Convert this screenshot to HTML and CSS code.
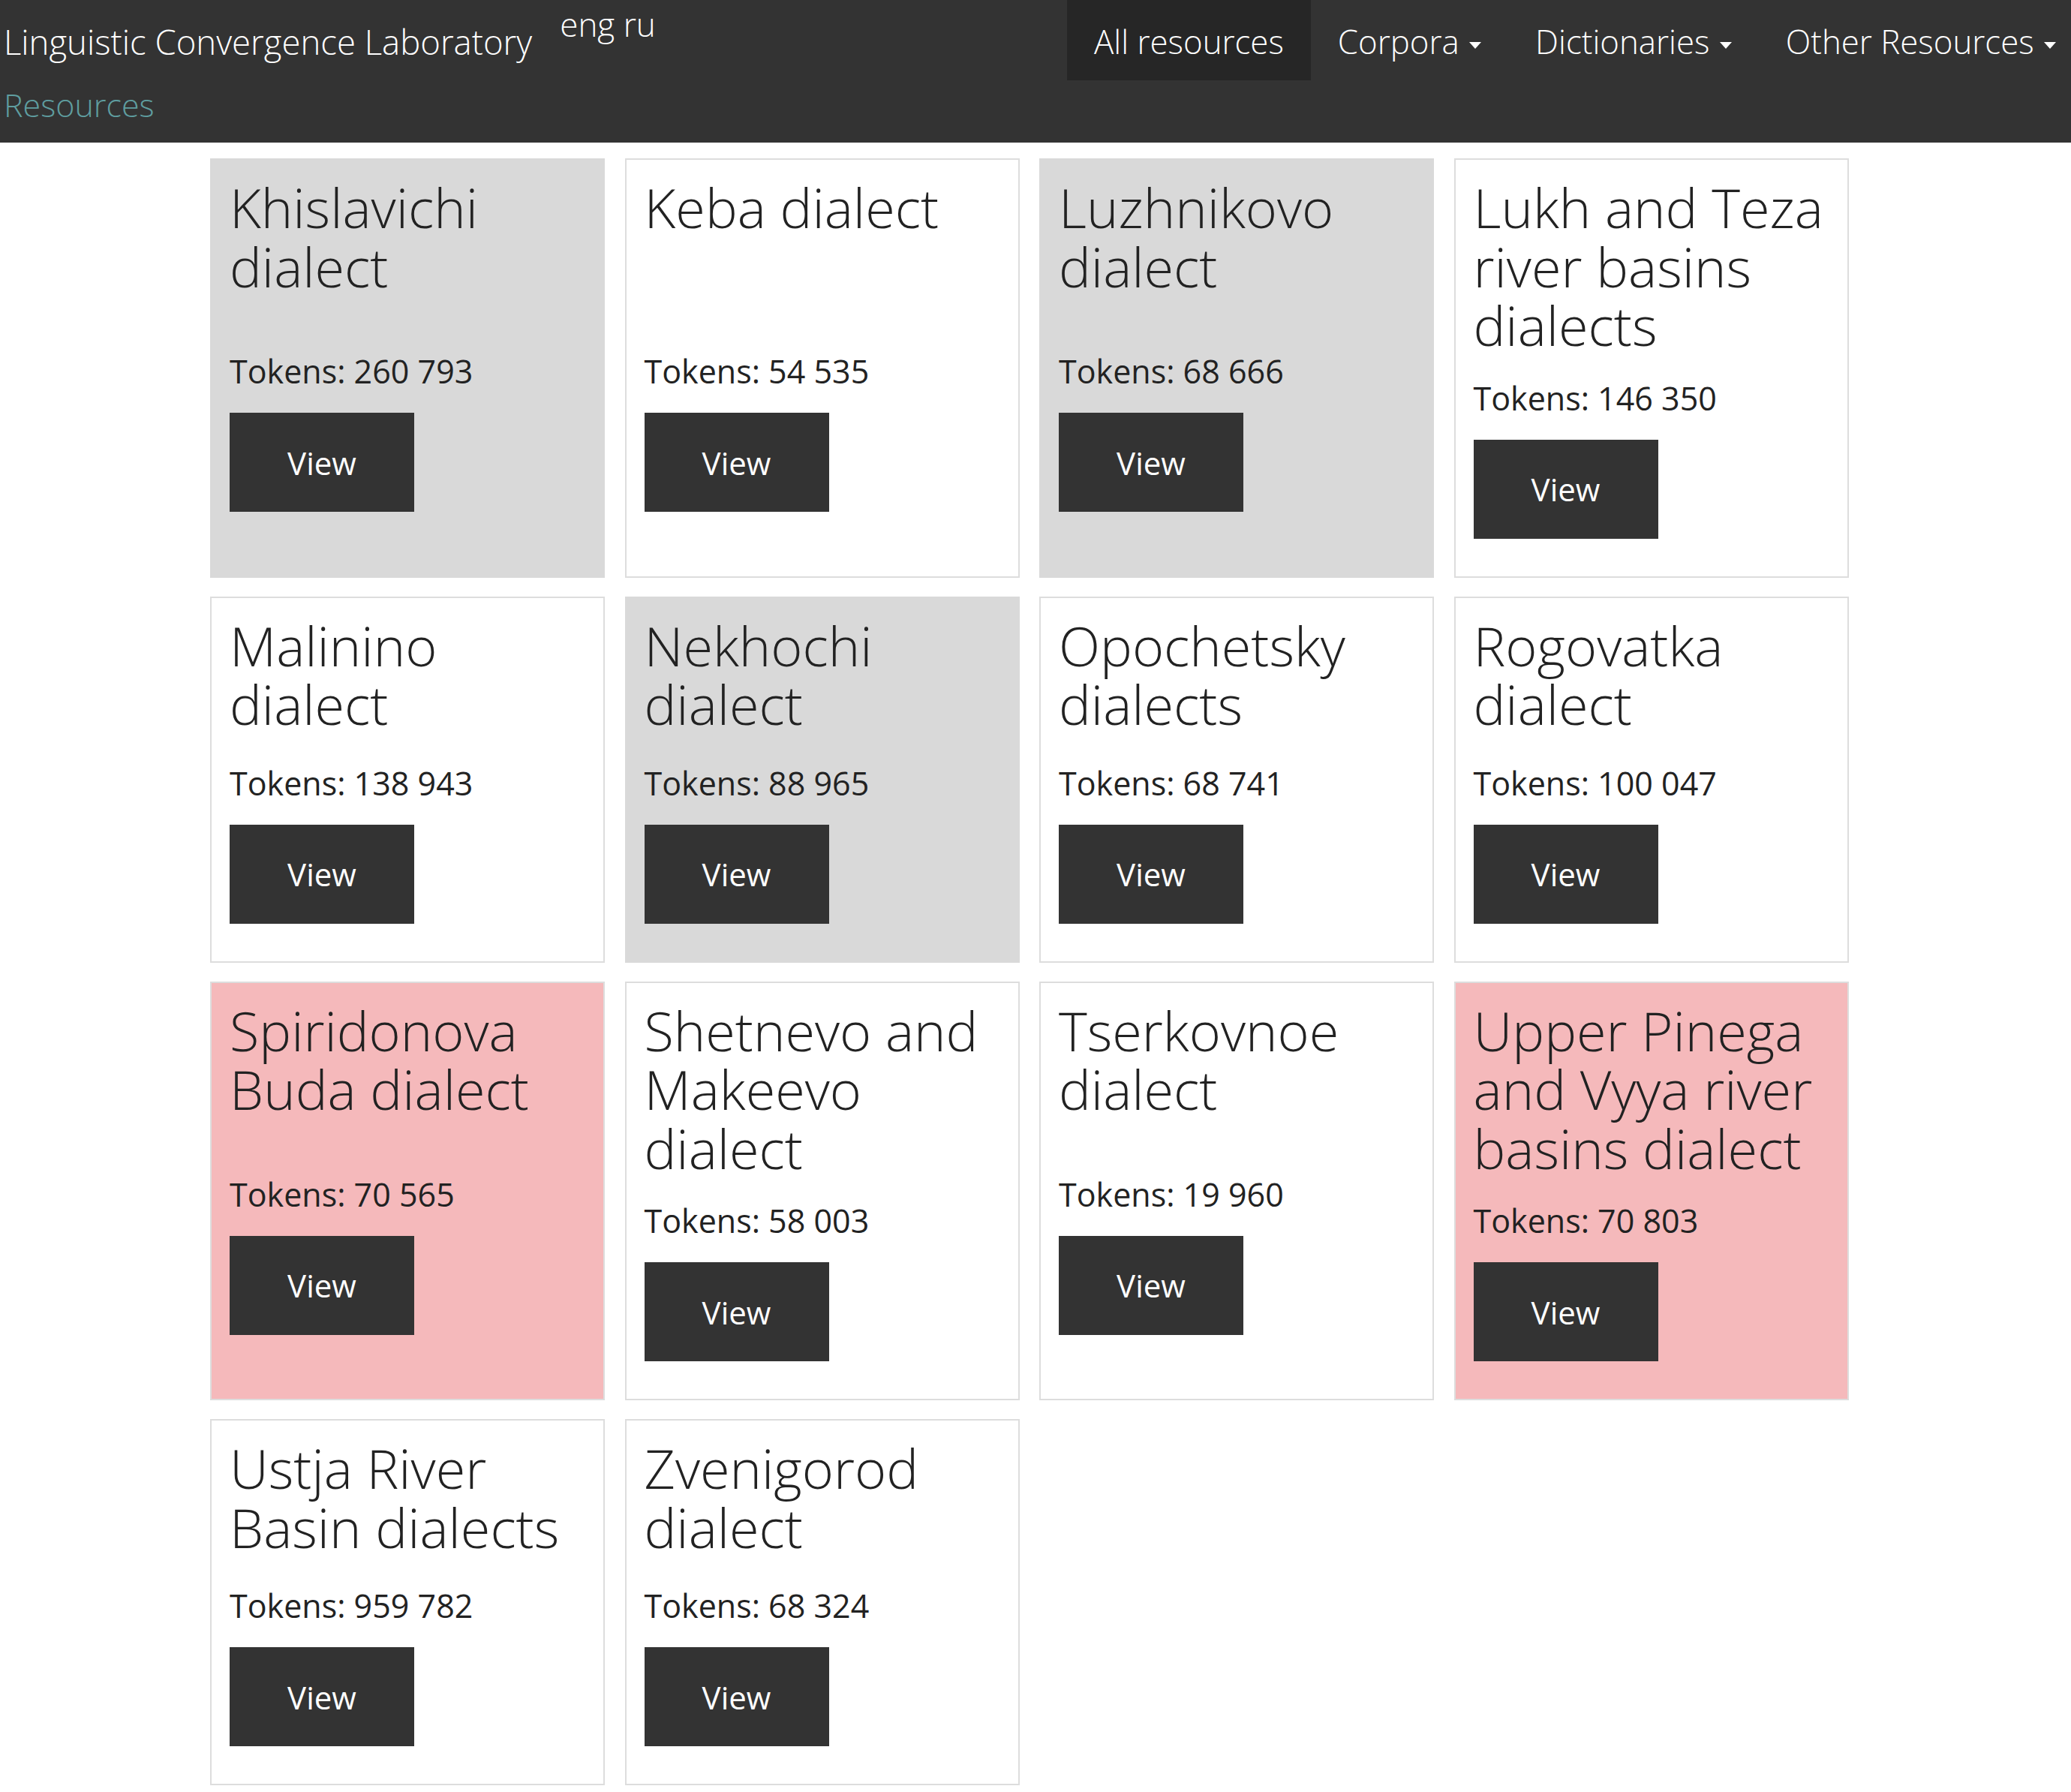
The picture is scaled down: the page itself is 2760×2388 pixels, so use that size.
FILE: index.html
```html
<!DOCTYPE html>
<html lang="en">
<head>
<meta charset="utf-8">
<title>Resources — Linguistic Convergence Laboratory</title>
<link rel="stylesheet" href="styles.css">
</head>
<body>
<header class="navbar">
  <div class="brand-block">
    <div class="brand-row">
      <a class="brand" href="#">Linguistic Convergence Laboratory</a>
      <div class="langs"><a href="#">eng</a> <a href="#">ru</a></div>
    </div>
    <div class="subtitle">Resources</div>
  </div>
  <ul class="nav">
    <li class="nav-item active"><a href="#">All resources</a></li>
    <li class="nav-item"><a href="#">Corpora <span class="caret"></span></a></li>
    <li class="nav-item"><a href="#">Dictionaries <span class="caret"></span></a></li>
    <li class="nav-item"><a href="#">Other Resources <span class="caret"></span></a></li>
  </ul>
</header>

<main class="grid">
  <div class="card card-gray">
    <h2 class="card-title">Khislavichi dialect</h2>
    <div class="card-body"><p class="tokens">Tokens: 260 793</p><a class="btn" href="#">View</a></div>
  </div>
  <div class="card">
    <h2 class="card-title">Keba dialect</h2>
    <div class="card-body"><p class="tokens">Tokens: 54 535</p><a class="btn" href="#">View</a></div>
  </div>
  <div class="card card-gray">
    <h2 class="card-title">Luzhnikovo dialect</h2>
    <div class="card-body"><p class="tokens">Tokens: 68 666</p><a class="btn" href="#">View</a></div>
  </div>
  <div class="card">
    <h2 class="card-title">Lukh and Teza river basins dialects</h2>
    <div class="card-body"><p class="tokens">Tokens: 146 350</p><a class="btn" href="#">View</a></div>
  </div>

  <div class="card">
    <h2 class="card-title">Malinino dialect</h2>
    <div class="card-body"><p class="tokens">Tokens: 138 943</p><a class="btn" href="#">View</a></div>
  </div>
  <div class="card card-gray">
    <h2 class="card-title">Nekhochi dialect</h2>
    <div class="card-body"><p class="tokens">Tokens: 88 965</p><a class="btn" href="#">View</a></div>
  </div>
  <div class="card">
    <h2 class="card-title">Opochetsky dialects</h2>
    <div class="card-body"><p class="tokens">Tokens: 68 741</p><a class="btn" href="#">View</a></div>
  </div>
  <div class="card">
    <h2 class="card-title">Rogovatka dialect</h2>
    <div class="card-body"><p class="tokens">Tokens: 100 047</p><a class="btn" href="#">View</a></div>
  </div>

  <div class="card card-pink">
    <h2 class="card-title">Spiridonova Buda dialect</h2>
    <div class="card-body"><p class="tokens">Tokens: 70 565</p><a class="btn" href="#">View</a></div>
  </div>
  <div class="card">
    <h2 class="card-title">Shetnevo and Makeevo dialect</h2>
    <div class="card-body"><p class="tokens">Tokens: 58 003</p><a class="btn" href="#">View</a></div>
  </div>
  <div class="card">
    <h2 class="card-title">Tserkovnoe dialect</h2>
    <div class="card-body"><p class="tokens">Tokens: 19 960</p><a class="btn" href="#">View</a></div>
  </div>
  <div class="card card-pink">
    <h2 class="card-title">Upper Pinega and Vyya river basins dialect</h2>
    <div class="card-body"><p class="tokens">Tokens: 70 803</p><a class="btn" href="#">View</a></div>
  </div>

  <div class="card">
    <h2 class="card-title">Ustja River Basin dialects</h2>
    <div class="card-body"><p class="tokens">Tokens: 959 782</p><a class="btn" href="#">View</a></div>
  </div>
  <div class="card">
    <h2 class="card-title">Zvenigorod dialect</h2>
    <div class="card-body"><p class="tokens">Tokens: 68 324</p><a class="btn" href="#">View</a></div>
  </div>
</main>
</body>
</html>
```

FILE: styles.css
```css
* { box-sizing: border-box; }

html, body {
  margin: 0;
  padding: 0;
  background: #ffffff;
  overflow-x: hidden;
}

body {
  font-family: "Open Sans", "Noto Sans", "Liberation Sans", sans-serif;
  color: #222222;
}

a { text-decoration: none; color: inherit; }

/* ---------- navbar ---------- */
.navbar {
  background: #333333;
  height: 190px;
  display: flex;
  justify-content: space-between;
  align-items: flex-start;
  overflow: hidden;
}

.brand-block {
  display: flex;
  flex-direction: column;
  padding-left: 5px;
}

.brand-row {
  display: flex;
  align-items: flex-start;
}

.brand {
  font-weight: 300;
  font-size: 45.5px;
  line-height: 60px;
  padding-top: 25px;
  color: #ffffff;
}

.langs {
  font-weight: 300;
  font-size: 44px;
  line-height: 60px;
  padding-top: 2px;
  margin-left: 37px;
  color: #ffffff;
}

.subtitle {
  font-weight: 300;
  font-size: 43px;
  line-height: 60px;
  margin-top: 25px;
  color: #5f9ea0;
}

.nav {
  list-style: none;
  margin: 0 -16px 0 0;
  padding: 0;
  display: flex;
}

.nav-item a {
  display: block;
  font-weight: 300;
  font-size: 43.8px;
  line-height: 48px;
  padding: 31px 36px 28px;
  color: #ffffff;
}

.nav-item.active a {
  background: #262626;
}

.caret {
  display: inline-block;
  width: 0;
  height: 0;
  margin-left: 2px;
  vertical-align: middle;
  border-top: 9px solid #ffffff;
  border-left: 8px solid transparent;
  border-right: 8px solid transparent;
}

/* ---------- cards ---------- */
.grid {
  display: grid;
  grid-template-columns: repeat(4, 526px);
  column-gap: 26.5px;
  row-gap: 25px;
  padding: 21px 0 0 280px;
}

.card {
  display: flex;
  flex-direction: column;
  border: 2px solid #dddddd;
  background: #ffffff;
  padding: 24px 18px 0 24px;
}

.card-gray { background: #d9d9d9; border-color: #d9d9d9; }
.card-pink { background: #f5b9bb; }

.card-title {
  margin: 0 0 28px;
  min-height: 165px;
  font-weight: 300;
  font-size: 72px;
  line-height: 78.5px;
  color: #222222;
}

.card-body {
  margin-top: auto;
  margin-bottom: auto;
  padding-bottom: 50px;
}

.tokens {
  margin: 0 0 25px;
  font-size: 43px;
  line-height: 60px;
  font-weight: 400;
  color: #222222;
}

.btn {
  display: flex;
  align-items: center;
  justify-content: center;
  width: 246px;
  height: 132px;
  background: #333333;
  color: #ffffff;
  font-size: 42px;
  font-weight: 400;
}
```
